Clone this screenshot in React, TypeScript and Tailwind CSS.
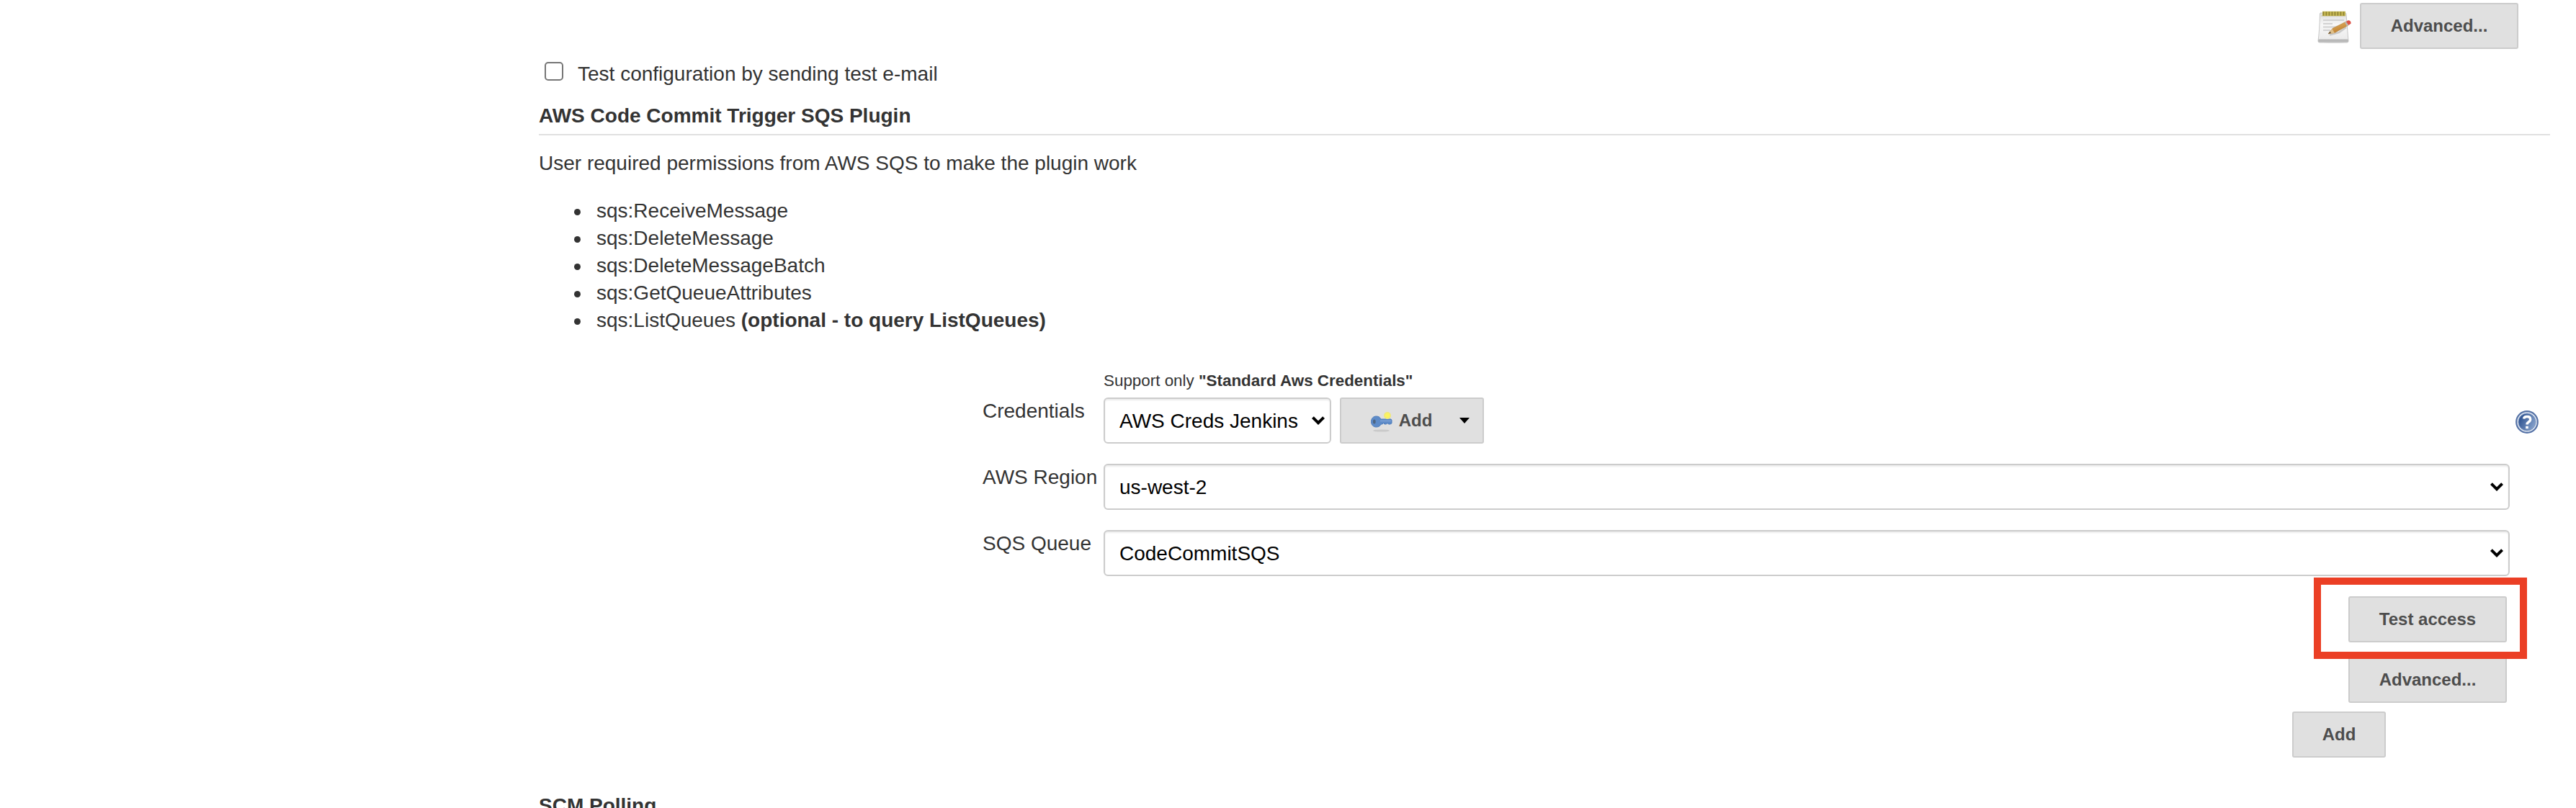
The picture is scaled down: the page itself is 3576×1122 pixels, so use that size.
import type { ReactNode } from "react";

const permissions = [
  "sqs:ReceiveMessage",
  "sqs:DeleteMessage",
  "sqs:DeleteMessageBatch",
  "sqs:GetQueueAttributes",
];

function Button({ children, className = "w-[220px]" }: { children: ReactNode; className?: string }) {
  return (
    <button
      type="button"
      className={`${className} flex h-16 shrink-0 items-center justify-center rounded-[3px] border-2 border-[#cccccc] bg-[#e0e0e0] text-2xl font-bold whitespace-nowrap text-[#4d4d4d]`}
    >
      {children}
    </button>
  );
}

function Select({ value, className = "" }: { value: string; className?: string }) {
  return (
    <div
      className={`${className} flex h-16 items-center justify-between rounded-[6px] border-2 border-[#cccccc] bg-white pr-[7px] pl-5 whitespace-nowrap text-black shadow-[inset_0_2px_2px_rgba(0,0,0,0.075)]`}
    >
      <span className="pt-0.5">{value}</span>
      <svg width="18" height="12" viewBox="0 0 18 12" className="mb-[1px]">
        <path d="M1.4 1.6 9 9.2l7.6-7.6" fill="none" stroke="#000" strokeWidth="4" />
      </svg>
    </div>
  );
}

function FormRow({ label, children }: { label: string; children: ReactNode }) {
  return (
    <div className="flex h-16">
      <div className="w-[168px] whitespace-nowrap">{label}</div>
      {children}
    </div>
  );
}

function NotepadIcon() {
  return (
    <svg width="48" height="48" viewBox="0 0 48 48">
      <defs>
        <linearGradient id="sheet" x1="0" y1="0" x2="0" y2="1">
          <stop offset="0" stopColor="#dedede" />
          <stop offset=".4" stopColor="#f7f7f7" />
          <stop offset="1" stopColor="#e9e9e9" />
        </linearGradient>
        <linearGradient id="pencil" x1="0" y1="0" x2=".5" y2="1">
          <stop offset="0" stopColor="#ecbd6e" />
          <stop offset="1" stopColor="#b9792a" />
        </linearGradient>
      </defs>
      <ellipse cx="24" cy="46" rx="18" ry="2" fill="#e6e6e6" />
      <path d="M5 6h35q1 0 1 2l3 37q0 2-2 2H4q-2 0-2-2Q4 30 4.500 8q0-2 .5-2z" fill="url(#sheet)" stroke="#c6c6c6" strokeWidth="1" />
      <path d="M2.500 42.500h41l.5 2.500q0 1.500-2 1.500H4q-2 0-2-1.500z" fill="#b8b8b8" />
      <path d="M6 9h34v2H6z" fill="#d6d4c8" />
      <path d="M8 7h32" stroke="#c9bb55" strokeWidth="6.500" />
      <path d="M8.500 7h31" stroke="#8f8334" strokeWidth="5.500" strokeDasharray="1.800 2.200" />
      <path d="M9 16h29M9 21h13M9 25.500h22M9 30h10" stroke="#d2d2d2" strokeWidth="1.800" />
      <path d="M18 36.500 31 33 41 26" fill="none" stroke="#c9c9c9" strokeWidth="2.500" />
      <path d="m16 35 6-7.500L41 18l3 5L25 33.500z" fill="url(#pencil)" stroke="#b07c33" strokeWidth=".6" />
      <path d="m16 35 5.500-7 3.500 6z" fill="#dfc08a" />
      <path d="m16 35 2.500-3.200 1.500 2.200z" fill="#5a4a34" />
      <path d="m39 19 2-1 3 5-2.200 1.200z" fill="#b9b9b9" />
      <path d="m41 18 2.500-1.800q4-.2 4.200 4.300L44.500 23z" fill="#dd5145" />
    </svg>
  );
}

function KeyIcon() {
  return (
    <svg width="32" height="32" viewBox="0 0 32 32" className="mr-2">
      <ellipse cx="15.500" cy="30" rx="11.500" ry="1.600" fill="#c9c9c9" />
      <path
        d="M8.500 10c3.500 0 5.200 1.500 6.300 4h14.200l1 1.500v4.300l-2 1.200h-2.500l-1.500-1.500-1.500 1.500H20l-1.500-1.500L17 21h-1.800c-1.300 2.500-3.500 4-6.700 4-4 0-7-3-7-7.500s3-7.500 7-7.500z"
        fill="#5d8bc8"
        stroke="#4f7dbb"
        strokeWidth="1"
      />
      <path d="M14 16.500h15" stroke="#7ea3d6" strokeWidth="1.500" />
      <ellipse cx="5.800" cy="17.500" rx="1.900" ry="3" fill="#4d6583" />
      <circle cx="24" cy="9" r="5" fill="#f0e878" />
      <circle cx="24" cy="9" r="3.200" fill="#fbf35f" />
    </svg>
  );
}

function HelpIcon() {
  return (
    <svg width="32" height="32" viewBox="0 0 32 32">
      <defs>
        <linearGradient id="help" x1="0" y1=".3" x2="1" y2=".8">
          <stop offset="0" stopColor="#2a4f8e" />
          <stop offset="1" stopColor="#8ca7d0" />
        </linearGradient>
      </defs>
      <circle cx="16" cy="16" r="14.800" fill="#e6ecf5" stroke="#5572a6" strokeWidth="2.200" />
      <circle cx="16" cy="16" r="12" fill="url(#help)" stroke="#7b94be" strokeWidth="1" />
      <path d="M11.500 11.500Q12 8.500 16 8.500q4.700 0 4.700 3.700 0 2.300-2.500 3.800-2.200 1.300-2.200 3.500" fill="none" stroke="#fff" strokeWidth="3.400" />
      <path d="M14.200 21.800h3.600v3.400h-3.600z" fill="#fff" />
    </svg>
  );
}

export default function App() {
  return (
    <main className="h-[1122px] w-[3576px] overflow-hidden bg-white pt-1 pr-9 pl-[748px] font-['Liberation_Sans',Arial,sans-serif] text-[28px] leading-[38px] text-[#333333]">
      <div className="flex justify-end pr-11">
        <div className="mt-2 mr-3">
          <NotepadIcon />
        </div>
        <Button>Advanced...</Button>
      </div>

      <label className="mt-4 flex">
        <input
          type="checkbox"
          className="mt-0.5 mr-5 ml-2 size-[26px] appearance-none rounded-[5px] border-2 border-[#767676] bg-white"
        />
        Test configuration by sending test e-mail
      </label>

      <h2 className="mt-5 border-b-2 border-[#e0e0e0] pb-1.5 font-bold">AWS Code Commit Trigger SQS Plugin</h2>

      <p className="mt-5">User required permissions from AWS SQS to make the plugin work</p>

      <ul className="mt-7">
        {permissions.map((name) => (
          <li key={name} className="flex items-center">
            <span className="mt-0.5 mr-[22px] ml-[49px] size-[9px] rounded-full bg-[#333333]" />
            {name}
          </li>
        ))}
        <li className="flex items-center whitespace-pre">
          <span className="mt-0.5 mr-[22px] ml-[49px] size-[9px] rounded-full bg-[#333333]" />
          sqs:ListQueues <b>(optional - to query ListQueues)</b>
        </li>
      </ul>

      <section className="mt-[50px] pl-[616px]">
        <p className="mb-2 pl-[168px] text-[22.4px] leading-[30px]">
          Support only <b>"Standard Aws Credentials"</b>
        </p>
        <div className="flex flex-col gap-7">
          <FormRow label="Credentials">
            <Select value="AWS Creds Jenkins" className="w-[316px]" />
            <div className="ml-3">
              <Button className="w-[200px] pl-[22px]">
                <KeyIcon />
                Add
                <svg width="14" height="8" viewBox="0 0 14 8" className="ml-[38px]">
                  <path d="M0 0h14L7 8z" fill="#000" />
                </svg>
              </Button>
            </div>
            <div className="mt-[18px] mr-4 ml-auto">
              <HelpIcon />
            </div>
          </FormRow>
          <FormRow label="AWS Region">
            <Select value="us-west-2" className="w-[1952px]" />
          </FormRow>
          <FormRow label="SQS Queue">
            <Select value="CodeCommitSQS" className="w-[1952px]" />
          </FormRow>
        </div>
      </section>

      <div className="mt-7 flex flex-col items-end pr-15">
        <div className="relative">
          <Button>Test access</Button>
          <div className="absolute -top-[26px] -left-12 h-[113px] w-[296px] border-10 border-[#eb3f25]" />
        </div>
        <div className="mt-5">
          <Button>Advanced...</Button>
        </div>
        <div className="mt-3 mr-[168px]">
          <Button className="w-[130px]">Add</Button>
        </div>
      </div>

      <h2 className="mt-12 font-bold">SCM Polling</h2>
    </main>
  );
}
